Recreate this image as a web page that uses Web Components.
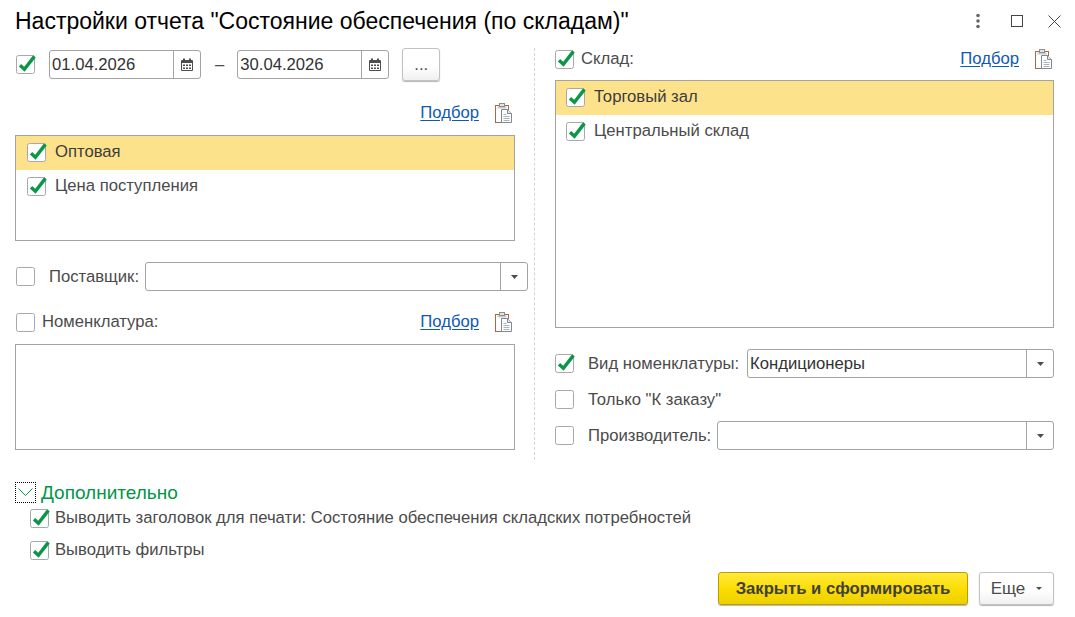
<!DOCTYPE html>
<html lang="ru">
<head>
<meta charset="utf-8">
<title>Настройки отчета</title>
<style>
html, body { margin: 0; height: 100%; background: #fff; overflow: hidden; }
body { font: 16.67px "Liberation Sans", Arial, sans-serif; color: #4b4b4b; }
</style>
</head>
<body>
<report-form></report-form>

<script>
'use strict'

const CLIP_ICON = `
    <svg width="18" height="20" viewBox="0 0 18 20" style="display:block;overflow:visible">
        <rect x=".5" y="2.5" width="13" height="17" fill="#fff" stroke="#a5694a"/>
        <rect x="2.5" y="3.5" width="9" height="2" fill="#c9c9c9"/>
        <rect x="4.5" y=".5" width="5" height="3" fill="#e4e4e4" stroke="#8d8d8d"/>
        <path d="M6.5 6.5h6l4 4v9h-10z" fill="#fff" stroke="#7d8a96"/>
        <path d="M12.5 6.5v4h4" fill="#dfe5ea" stroke="#7d8a96"/>
        <path d="M8.5 11.5h3M8.5 13.5h6M8.5 15.5h6M8.5 17.5h6" stroke="#a9b3bc" fill="none"/>
    </svg>`;

class XCheck extends HTMLElement {
    constructor() {
        super();
        const shadow = this.attachShadow({mode: 'open'});
        const tick = this.hasAttribute('checked')
            ? '<path d="M4 10.2l4.4 4L18.4 1.4" fill="none" stroke="#0b9748" stroke-width="3.4"/>'
            : '';
        shadow.innerHTML = `
            <style>
            :host { display: block; flex: none; width: 19px; height: 19px; }
            svg { display: block; overflow: visible; }
            </style>
            <svg width="19" height="19" viewBox="0 0 19 19">
                <rect x=".5" y=".5" width="18" height="18" rx="2" fill="#fff" stroke="#a8a8a8"/>
                ${tick}
            </svg>
        `;
    }
}

class XField extends HTMLElement {
    constructor() {
        super();
        const shadow = this.attachShadow({mode: 'open'});
        const kind = this.getAttribute('kind') || 'drop';
        const icon = kind === 'date'
            ? `<svg width="12" height="13" viewBox="0 0 12 13">
                   <path d="M.5 2.5h11v10H.5z" fill="#fff" stroke="#4d4d4d"/>
                   <path d="M1 2h10v3H1z" fill="#4d4d4d"/>
                   <path d="M3 .5v2M9 .5v2" stroke="#4d4d4d" stroke-width="2"/>
                   <path d="M2 6.5h2v1.4H2zM5 6.5h2v1.4H5zM8 6.5h2v1.4H8zM2 9.5h2v1.4H2zM5 9.5h2v1.4H5zM8 9.5h2v1.4H8z" fill="#4d4d4d"/>
               </svg>`
            : `<svg width="7" height="4" viewBox="0 0 7 4"><path d="M0 0h7L3.5 4z" fill="#4d4d4d"/></svg>`;
        shadow.innerHTML = `
            <style>
            :host {
                background: #fff;
                border: 1px solid #a3a3a3;
                border-radius: 3px;
                box-sizing: border-box;
                display: flex;
                flex: none;
                height: 29px;
            }
            .value {
                color: #333;
                flex: 1;
                line-height: 27px;
                min-width: 0;
                padding-left: 2px;
            }
            .btn {
                align-items: center;
                border-left: 1px solid #a3a3a3;
                display: flex;
                flex: none;
                justify-content: center;
                width: 26px;
            }
            </style>
            <div class="value"><slot></slot></div>
            <div class="btn">${icon}</div>
        `;
    }
}

class XPick extends HTMLElement {
    constructor() {
        super();
        const shadow = this.attachShadow({mode: 'open'});
        shadow.innerHTML = `
            <style>
            :host { align-items: center; display: flex; flex: none; gap: 16px; height: 22px; }
            a { color: #0f59b4; text-decoration: underline; text-underline-offset: 2px; }
            </style>
            <a>Подбор</a>
            ${CLIP_ICON}
        `;
    }
}

class XList extends HTMLElement {
    constructor() {
        super();
        const shadow = this.attachShadow({mode: 'open'});
        shadow.innerHTML = `
            <style>
            :host {
                background: #fff;
                border: 1px solid #a3a3a3;
                box-sizing: border-box;
                display: block;
            }
            </style>
            <slot></slot>
        `;
    }
}

class XListItem extends HTMLElement {
    constructor() {
        super();
        const shadow = this.attachShadow({mode: 'open'});
        shadow.innerHTML = `
            <style>
            :host {
                align-items: center;
                box-sizing: border-box;
                color: #4b4b4b;
                column-gap: 9px;
                display: flex;
                height: 34px;
                padding: 0 0 2px var(--item-indent, 11px);
            }
            :host([selected]) { background: #fde28c; color: #3c3c3c; }
            </style>
            <x-check checked></x-check>
            <slot></slot>
        `;
    }
}

class XButton extends HTMLElement {
    constructor() {
        super();
        const shadow = this.attachShadow({mode: 'open'});
        shadow.innerHTML = `
            <style>
            :host {
                align-items: center;
                background: linear-gradient(#fff 55%, #f0f0f0);
                border: 1px solid #c2c2c2;
                border-radius: 3px;
                box-shadow: 0 1px 1px #b5b5b5;
                box-sizing: border-box;
                color: #4b4b4b;
                display: flex;
                flex: none;
                height: 33px;
                justify-content: center;
            }
            :host([primary]) {
                background: linear-gradient(#ffe93b, #fbdc00 55%, #eccf00);
                border-color: #b9a000;
                color: #3f3f3f;
                font-weight: bold;
            }
            </style>
            <slot></slot>
        `;
    }
}

class TitleBar extends HTMLElement {
    constructor() {
        super();
        const shadow = this.attachShadow({mode: 'open'});
        shadow.innerHTML = `
            <style>
            :host {
                align-items: center;
                display: flex;
                height: 42px;
                padding: 0 14px 0 15px;
            }
            h1 {
                color: #000;
                flex: 1;
                font-size: 23px;
                font-weight: normal;
                margin: 0;
            }
            .tools { align-items: center; display: flex; }
            svg { display: block; }
            </style>
            <h1><slot></slot></h1>
            <div class="tools">
                <svg width="14" height="16" viewBox="0 0 14 16" style="margin-right:26px">
                    <circle cx="7" cy="2.5" r="1.8" fill="#666"/>
                    <circle cx="7" cy="8" r="1.8" fill="#666"/>
                    <circle cx="7" cy="13.5" r="1.8" fill="#666"/>
                </svg>
                <svg width="12" height="12" viewBox="0 0 12 12" style="margin-right:25px">
                    <rect x=".5" y=".5" width="11" height="11" fill="none" stroke="#444"/>
                </svg>
                <svg width="13" height="13" viewBox="0 0 13 13">
                    <path d="M.5.5l12 12M12.5.5l-12 12" stroke="#444" fill="none"/>
                </svg>
            </div>
        `;
    }
}

class ReportForm extends HTMLElement {
    constructor() {
        super();
        const shadow = this.attachShadow({mode: 'open'});
        shadow.innerHTML = `
            <style>
            :host { display: block; width: 1075px; }
            .columns { align-items: flex-start; display: flex; padding: 6px 0 0 15px; }
            .left { flex: none; width: 513px; }
            .right {
                border-left: 1px dashed #d4d4d4;
                flex: none;
                height: 412px;
                margin-left: 6px;
                padding-left: 20px;
                width: 499px;
            }
            .row { align-items: center; display: flex; }
            .push { margin-left: auto; }
            .dates { height: 33px; }
            .dash { color: #4b4b4b; margin: 0 13px 0 14px; }
            .pick-row { justify-content: flex-end; }
            .pick-left { margin-top: 21px; padding-right: 2px; width: 498px; }
            .lst-1 { height: 106px; margin-top: 11px; width: 500px; }
            .supplier { height: 29px; margin-top: 21px; }
            .nomen { height: 22px; margin-top: 20px; width: 498px; }
            .lst-2 { height: 106px; margin-top: 11px; width: 500px; }
            .sklad { height: 22px; width: 498px; }
            .lst-3 { --item-indent: 10px; height: 248px; margin-top: 10px; width: 499px; }
            .vid { height: 29px; margin-top: 21px; }
            .only { height: 19px; margin-top: 12px; }
            .maker { height: 29px; margin-top: 12px; }
            .lbl { white-space: nowrap; }
            .more { padding: 22px 0 0 15px; }
            .head { align-items: center; display: flex; height: 21px; }
            .toggle {
                align-items: center;
                border: 1px dotted #000;
                box-sizing: border-box;
                display: flex;
                flex: none;
                height: 21px;
                justify-content: center;
                width: 21px;
            }
            .head span { color: #009646; font-size: 19px; margin-left: 5px; }
            .opt { column-gap: 6px; height: 20px; margin-left: 15px; }
            .opt-1 { margin-top: 5px; }
            .opt-2 { margin-top: 12px; }
            .actions { display: flex; justify-content: flex-end; margin-top: 12px; padding-right: 21px; }
            .close { width: 250px; }
            .etc { column-gap: 6px; font-size: 17px; margin-left: 11px; width: 75px; }
            </style>
            <title-bar>Настройки отчета "Состояние обеспечения (по складам)"</title-bar>
            <div class="columns">
                <div class="left">
                    <div class="row dates">
                        <x-check checked style="margin-left:1px"></x-check>
                        <x-field kind="date" style="margin-left:14px;width:152px">01.04.2026</x-field>
                        <span class="dash">–</span>
                        <x-field kind="date" style="width:152px">30.04.2026</x-field>
                        <x-button style="margin-left:13px;width:38px">...</x-button>
                    </div>
                    <div class="row pick-row pick-left"><x-pick></x-pick></div>
                    <x-list class="lst-1">
                        <x-list-item selected>Оптовая</x-list-item>
                        <x-list-item>Цена поступления</x-list-item>
                    </x-list>
                    <div class="row supplier">
                        <x-check style="margin-left:1px"></x-check>
                        <span class="lbl" style="margin-left:14px;width:96px">Поставщик:</span>
                        <x-field style="width:383px"></x-field>
                    </div>
                    <div class="row nomen">
                        <x-check style="margin-left:1px"></x-check>
                        <span class="lbl" style="margin-left:7px">Номенклатура:</span>
                        <x-pick class="push"></x-pick>
                    </div>
                    <x-list class="lst-2"></x-list>
                </div>
                <div class="right">
                    <div class="row sklad">
                        <x-check checked></x-check>
                        <span class="lbl" style="margin-left:7px">Склад:</span>
                        <x-pick class="push"></x-pick>
                    </div>
                    <x-list class="lst-3">
                        <x-list-item selected>Торговый зал</x-list-item>
                        <x-list-item>Центральный склад</x-list-item>
                    </x-list>
                    <div class="row vid">
                        <x-check checked></x-check>
                        <span class="lbl" style="margin-left:14px;width:159px">Вид номенклатуры:</span>
                        <x-field style="width:307px">Кондиционеры</x-field>
                    </div>
                    <div class="row only">
                        <x-check></x-check>
                        <span class="lbl" style="margin-left:14px">Только "К заказу"</span>
                    </div>
                    <div class="row maker">
                        <x-check></x-check>
                        <span class="lbl" style="margin-left:14px;width:129px">Производитель:</span>
                        <x-field style="width:337px"></x-field>
                    </div>
                </div>
            </div>
            <div class="more">
                <div class="head">
                    <div class="toggle">
                        <svg width="15" height="9" viewBox="0 0 15 9"><path d="M.5.5l7 7 7-7" fill="none" stroke="#0b9748"/></svg>
                    </div>
                    <span>Дополнительно</span>
                </div>
                <div class="row opt opt-1">
                    <x-check checked></x-check>
                    <span class="lbl">Выводить заголовок для печати: Состояние обеспечения складских потребностей</span>
                </div>
                <div class="row opt opt-2">
                    <x-check checked></x-check>
                    <span class="lbl">Выводить фильтры</span>
                </div>
            </div>
            <div class="actions">
                <x-button primary class="close">Закрыть и сформировать</x-button>
                <x-button class="etc">Еще
                    <svg width="6" height="3" viewBox="0 0 6 3" style="margin-left:5px"><path d="M0 0h6L3 3z" fill="#4d4d4d"/></svg>
                </x-button>
            </div>
        `;
    }
}

customElements.define('x-check', XCheck);
customElements.define('x-field', XField);
customElements.define('x-pick', XPick);
customElements.define('x-list', XList);
customElements.define('x-list-item', XListItem);
customElements.define('x-button', XButton);
customElements.define('title-bar', TitleBar);
customElements.define('report-form', ReportForm);
</script>
</body>
</html>
